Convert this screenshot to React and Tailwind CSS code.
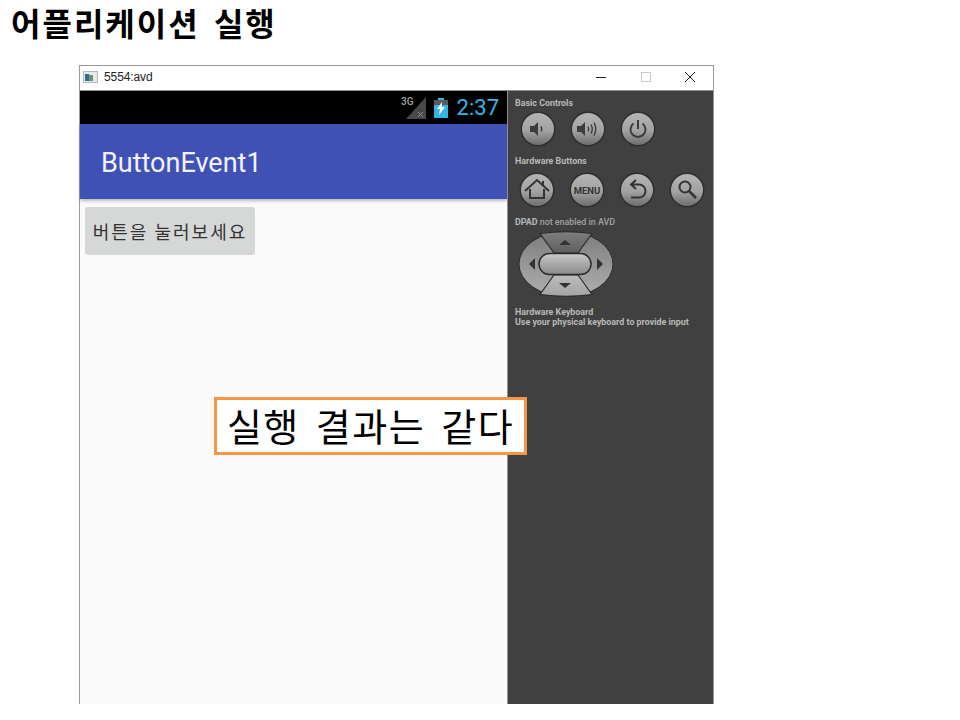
import React from "react";

const KR = "font-['Noto_Sans_CJK_KR','Noto_Sans',sans-serif]";

// round grey emulator button, icon is drawn inside
const RoundButton = ({ id, children }) => (
  <svg width="36" height="36" viewBox="0 0 36 36" className="block shrink-0">
    <defs>
      <linearGradient id={id} x1="0" y1="0" x2="0" y2="1">
        <stop offset="0" stopColor="#b4b4b4" />
        <stop offset="0.55" stopColor="#a2a2a2" />
        <stop offset="1" stopColor="#6e6e6e" />
      </linearGradient>
    </defs>
    <circle cx="18" cy="18" r="17.5" fill="#2e2e2e" />
    <circle cx="18" cy="18" r="16" fill={`url(#${id})`} />
    {children}
  </svg>
);

const Speaker = () => <path d="M10 15h4l4-4v14l-4-4h-4z" fill="#3c3c3c" />;

const Dpad = () => (
  <svg width="96" height="66" viewBox="0 0 96 66" className="block">
    <defs>
      <linearGradient id="padTop" x1="0" y1="0" x2="0" y2="1">
        <stop offset="0" stopColor="#7e7e7e" />
        <stop offset="1" stopColor="#5f5f5f" />
      </linearGradient>
      <linearGradient id="padBottom" x1="0" y1="0" x2="0" y2="1">
        <stop offset="0" stopColor="#bcbcbc" />
        <stop offset="1" stopColor="#a4a4a4" />
      </linearGradient>
      <linearGradient id="padSide" x1="0" y1="0" x2="0" y2="1">
        <stop offset="0" stopColor="#7c7c7c" />
        <stop offset="1" stopColor="#b0b0b0" />
      </linearGradient>
      <linearGradient id="padCenter" x1="0" y1="0" x2="0" y2="1">
        <stop offset="0" stopColor="#cccccc" />
        <stop offset="0.5" stopColor="#a8a8a8" />
        <stop offset="1" stopColor="#8a8a8a" />
      </linearGradient>
    </defs>
    <ellipse cx="48" cy="33" rx="47" ry="32.5" fill="url(#padSide)" stroke="#2b2b2b" strokeWidth="1" />
    <path d="M22 2.5Q48 -1 74 2.5L60 22H36z" fill="url(#padTop)" stroke="#2b2b2b" strokeWidth="1.2" />
    <path d="M36 44H60L74 63.5Q48 67 22 63.5z" fill="url(#padBottom)" stroke="#2b2b2b" strokeWidth="1.2" />
    <rect x="21" y="22.5" width="52" height="21" rx="10.5" fill="url(#padCenter)" stroke="#2b2b2b" strokeWidth="1.5" />
    <path d="M47 9l6 5H41z" fill="#333" />
    <path d="M47 57l6-5H41z" fill="#333" />
    <path d="M11 33l6-6v12z" fill="#333" />
    <path d="M85 33l-6-6v12z" fill="#333" />
  </svg>
);

const App = () => {
  return (
    <div className="relative w-[960px] h-[720px] overflow-hidden bg-white">
      <h1 className={`${KR} h-[65px] pl-[11px] pt-[2px] text-[32px] leading-[40px] font-bold text-black tracking-[2px] [word-spacing:5px]`}>
        어플리케이션 실행
      </h1>

      {/* Emulator window */}
      <div className="ml-[79px] w-[635px] h-[639px] flex flex-col border-t border-l border-r border-[#9a9a9a] bg-white">
        {/* Title bar */}
        <div className="h-[25px] shrink-0 flex items-center pl-[3px] pb-[3px] border-b border-[#8f8f8f]">
          <svg width="15" height="12" viewBox="0 0 15 12" className="block">
            <rect x="0.5" y="0.5" width="14" height="11" fill="#e6e9ec" stroke="#b4bcc2" />
            <rect x="2" y="3" width="4" height="7" fill="#2f6f8f" />
            <rect x="6" y="4" width="4" height="6" fill="#6f8f6f" />
          </svg>
          <span className="ml-[6px] font-['Liberation_Sans',sans-serif] text-[12px] tracking-[-0.1px] leading-none text-[#222]">5554:avd</span>
          <div className="ml-auto flex items-center">
            <svg width="100" height="14" viewBox="0 0 100 14" className="block mr-[17px]">
              <path d="M0 7.5h10" stroke="#222" strokeWidth="1" />
              <rect x="45.5" y="2.5" width="9" height="9" fill="none" stroke="#c9c9c9" />
              <path d="M89 2l10 10M99 2L89 12" stroke="#222" strokeWidth="1" />
            </svg>
          </div>
        </div>

        <div className="flex-1 flex min-h-0">
          {/* Phone screen */}
          <div className="w-[427px] shrink-0 flex flex-col bg-[#fafafa]">
            <div className="h-[33px] shrink-0 bg-black flex items-center justify-end pr-[8px]">
              <svg width="26" height="24" viewBox="0 0 26 24" className="block mr-[7px]">
                <path d="M25 1V23H5z" fill="#484848" />
                <path d="M17 16l5 5M22 16l-5 5" stroke="#8a8a8a" strokeWidth="1" />
                <text x="0" y="9" fontSize="10" fontWeight="500" fontFamily="Roboto, sans-serif" fill="#a4a4a4">3G</text>
              </svg>
              <svg width="14" height="20" viewBox="0 0 14 20" className="block mr-[9px]">
                <path d="M4 0h6v2h4v18H0V2h4z" fill="#33b5e5" />
                <path d="M0 2h14v5H0z" fill="#5a5a5a" />
                <path d="M8 4L3 11h3l-1 6 6-8H8z" fill="#fff" />
              </svg>
              <span className="font-['Roboto',sans-serif] text-[22px] leading-none text-[#33b5e5]">2:37</span>
            </div>
            <div className="h-[75px] shrink-0 bg-[#3f51b5] flex items-center pl-[21px] pt-[3px] shadow-[0_2px_3px_rgba(0,0,0,0.25)]">
              <span className="font-['Roboto',sans-serif] text-[27px] leading-none text-[#f2f3fa]">ButtonEvent1</span>
            </div>
            <div className="pl-[5px] pt-[8px]">
              <button className={`${KR} w-[170px] h-[48px] rounded-[3px] bg-[#d6d7d7] text-[18px] leading-none text-[#333] tracking-[2px]`}>
                버튼을 눌러보세요
              </button>
            </div>
          </div>

          {/* Emulator controls */}
          <div className="flex-1 border-l border-[#8f8f8f] bg-[#404040] pl-[7px] pt-[7px] font-['Roboto',sans-serif] text-[8.9px] leading-[10px] font-bold text-[#b8b8b8]">
            <div>Basic Controls</div>
            <div className="flex gap-[14px] ml-[5px] mt-[3px]">
              <RoundButton id="b1">
                <Speaker />
                <path d="M21 15.5q1.5 2.5 0 5" stroke="#3c3c3c" strokeWidth="1.5" fill="none" />
              </RoundButton>
              <RoundButton id="b2">
                <path d="M7 15h4l4-4v14l-4-4H7z" fill="#3c3c3c" />
                <path d="M18 15.5q1.5 2.5 0 5M21 13.5q2.5 4.5 0 9M24 11.5q3.5 6.5 0 13" stroke="#3c3c3c" strokeWidth="1.4" fill="none" />
              </RoundButton>
              <RoundButton id="b3">
                <path d="M13.5 12.5a7.5 7.5 0 1 0 9 0" stroke="#3c3c3c" strokeWidth="2" fill="none" />
                <path d="M18 9v9" stroke="#3c3c3c" strokeWidth="2" />
              </RoundButton>
            </div>
            <div className="mt-[9px]">Hardware Buttons</div>
            <div className="flex gap-[14px] ml-[4px] mt-[6px]">
              <RoundButton id="b4">
                <path d="M6 19L18 8l12 11M11 17v9h14v-9M24 9v5" stroke="#333" strokeWidth="2" fill="none" />
              </RoundButton>
              <RoundButton id="b5">
                <text x="18" y="21.5" textAnchor="middle" fontSize="9.5" fontWeight="700" fontFamily="Roboto, sans-serif" fill="#333">MENU</text>
              </RoundButton>
              <RoundButton id="b6">
                <path d="M17 8l-5 4.5 5 4.5M12 12.5h8a6.5 6.5 0 0 1 0 13h-8" stroke="#333" strokeWidth="2" fill="none" />
              </RoundButton>
              <RoundButton id="b7">
                <circle cx="16" cy="15" r="5.5" stroke="#333" strokeWidth="2" fill="none" />
                <path d="M20 19l7 7" stroke="#333" strokeWidth="2.5" />
              </RoundButton>
            </div>
            <div className="mt-[9px]">
              DPAD <span className="font-medium text-[#a0a0a0]">not enabled in AVD</span>
            </div>
            <div className="ml-[3px] mt-[4px]">
              <Dpad />
            </div>
            <div className="mt-[10px]">Hardware Keyboard</div>
            <div>Use your physical keyboard to provide input</div>
          </div>
        </div>
      </div>

      {/* Callout over the screenshot */}
      <div className={`${KR} absolute left-[214px] top-[397px] w-[313px] h-[58px] pb-[3px] border-[3px] border-[#f79646] bg-white flex items-center justify-center text-[38px] leading-none text-black tracking-[1.5px] [word-spacing:6px]`}>
        실행 결과는 같다
      </div>
    </div>
  );
};

export default App;
